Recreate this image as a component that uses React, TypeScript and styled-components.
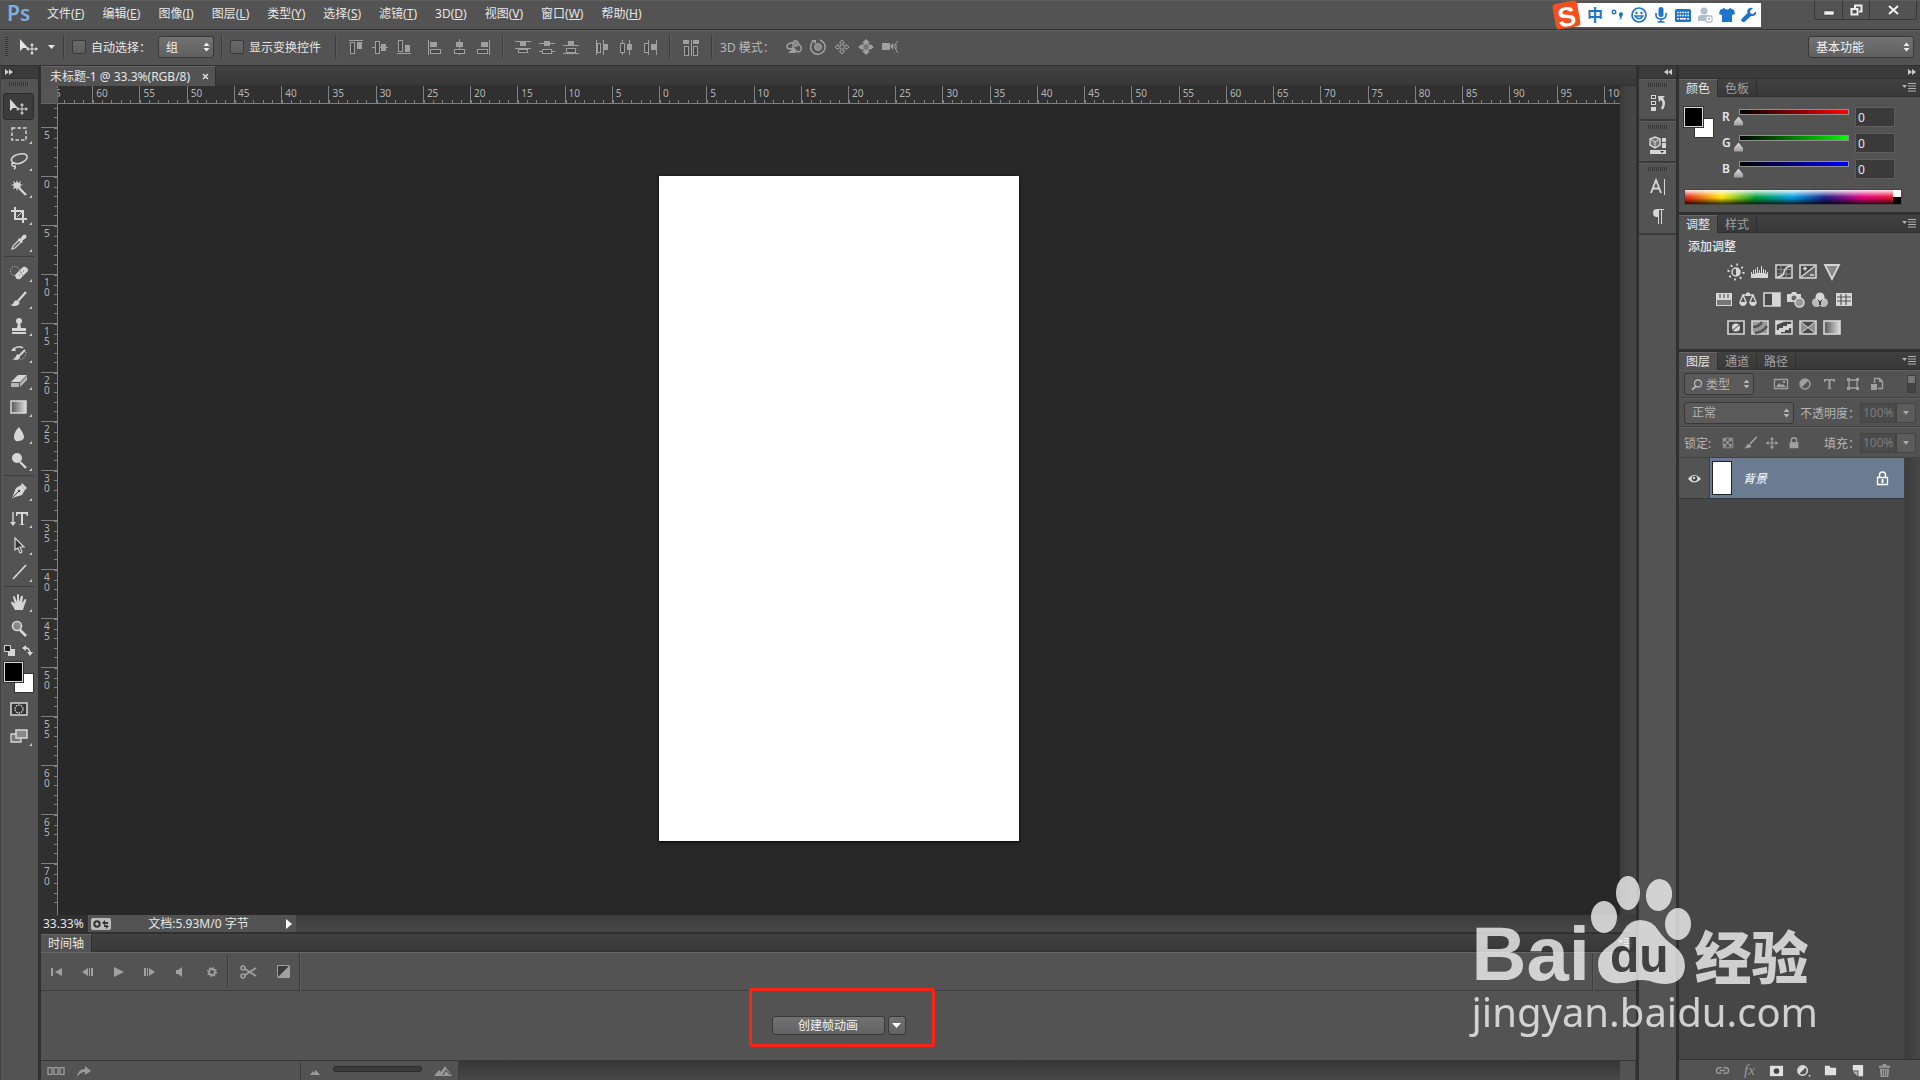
import React, { useState } from 'react';
import styled, { createGlobalStyle } from 'styled-components';

const c = {
  chrome: '#535353',
  dark: '#3b3b3b',
  edge: '#303030',
  line: '#3f3f3f',
  light: '#666',
  text: '#e6e6e6',
  dim: '#a0a0a0',
  icon: '#d6d6d6',
  canvas: '#282828',
};

const GlobalStyle = createGlobalStyle`
  * { box-sizing: border-box; }
  body { margin: 0; background: ${c.chrome}; }
  body, button, input, select {
    font-family: "Noto Sans", "Noto Sans CJK SC", sans-serif;
    font-size: 12px;
    color: ${c.text};
  }
  button { padding: 0; border: 0; background: none; cursor: pointer; }
`;

/* ---------- shared parts ---------- */

const Svg = styled.svg<{ $w: number; $h: number }>`
  display: block;
  flex: none;
  width: ${p => p.$w}px;
  height: ${p => p.$h}px;
  fill: currentColor;
  stroke: none;
`;

type IconProps = { w?: number; h?: number; vb?: string; children: React.ReactNode };
const Icon = ({ w = 18, h = 18, vb, children }: IconProps) => (
  <Svg $w={w} $h={h} viewBox={vb ?? `0 0 ${w} ${h}`} aria-hidden="true">{children}</Svg>
);
const S = (d: string, width = 1.5) => (
  <path d={d} fill="none" stroke="currentColor" strokeWidth={width} />
);

const IconButton = styled.button<{ $w?: number; $h?: number; $color?: string }>`
  display: flex;
  align-items: center;
  justify-content: center;
  flex: none;
  width: ${p => p.$w ?? 24}px;
  height: ${p => p.$h ?? 24}px;
  color: ${p => p.$color ?? c.dim};
`;

const Row = styled.div<{ $gap?: number }>`
  display: flex;
  align-items: center;
  gap: ${p => p.$gap ?? 0}px;
`;

const Separator = styled.span<{ $h?: number }>`
  flex: none;
  width: 2px;
  height: ${p => p.$h ?? 24}px;
  border-left: 1px solid #3d3d3d;
  border-right: 1px solid #5c5c5c;
`;

const SelectBox = styled.label<{ $w: number; $dim?: boolean }>`
  display: grid;
  flex: none;
  align-items: center;
  width: ${p => p.$w}px;
  height: 22px;
  border: 1px solid #383838;
  border-radius: 3px;
  background: ${p => (p.$dim ? '#5a5a5a' : 'linear-gradient(#727272, #606060)')};
  color: ${p => (p.$dim ? '#b4b4b4' : '#f0f0f0')};
  > * { grid-area: 1 / 1; }
  > svg { pointer-events: none; }
  > svg:last-child { justify-self: end; margin-right: 3px; }
`;

const NativeSelect = styled.select<{ $pad?: number }>`
  appearance: none;
  width: 100%;
  height: 20px;
  padding: 0 12px 0 ${p => p.$pad ?? 7}px;
  border: 0;
  background: transparent;
  color: inherit;
`;

const UpDown = () => (
  <Icon w={7} h={10}><path d="M0.5 4 3.5 0.5 6.5 4zM0.5 6h6L3.5 9.5z" /></Icon>
);

const Picker = ({ w, label, value, dim, pad, lead }: {
  w: number; label: string; value: string; dim?: boolean; pad?: number; lead?: React.ReactNode;
}) => (
  <SelectBox $w={w} $dim={dim}>
    {lead}
    <NativeSelect aria-label={label} $pad={pad} defaultValue={value}>
      <option style={{ color: '#000' }}>{value}</option>
    </NativeSelect>
    <UpDown />
  </SelectBox>
);

const DoubleArrow = ({ left }: { left?: boolean }) => (
  <Icon w={8} h={6}>
    <path d={left ? 'M4 0v6L0 3zM8 0v6L4 3z' : 'M0 0v6l4-3zM4 0v6l4-3z'} />
  </Icon>
);

const Grip = styled.span`
  width: 20px;
  height: 4px;
  background: repeating-linear-gradient(90deg, #333 0 1px, #5a5a5a 1px 2px);
`;

/* ---------- menu bar ---------- */

const Shell = styled.div`
  display: flex;
  flex-direction: column;
  height: 100vh;
  overflow: hidden;
  background: ${c.chrome};
`;

const MenuBar = styled.header`
  display: flex;
  flex: none;
  height: 30px;
  padding: 0 3px 0 7px;
  border-top: 1px solid #5e5e5e;
  border-bottom: 1px solid ${c.edge};
`;

const Logo = styled.span`
  width: 40px;
  color: #7fadde;
  font-size: 21px;
  font-weight: 600;
  line-height: 25px;
`;

const MenuList = styled.nav`
  display: flex;
  flex: 1;
  gap: 18px;
  align-items: center;
  height: 26px;
`;

const MenuItem = styled.button`
  white-space: nowrap;
  line-height: 20px;
`;

const ImeBar = styled.div`
  display: flex;
  align-items: center;
  width: 207px;
  height: 24px;
  margin: 2px 53px 0 0;
  background: linear-gradient(90deg, transparent 0 14px, #fff 14px);
  color: #1f74c8;
`;

const ImeLogo = styled.span`
  display: grid;
  place-items: center;
  width: 25px;
  height: 26px;
  margin-right: 5px;
  border-radius: 4px;
  background: #f2501e;
  color: #fff;
  font: 700 27px "Liberation Sans", sans-serif;
  transform: rotate(-10deg);
`;

const ImeChar = styled.button`
  width: 22px;
  color: #1f74c8;
  font-size: 16px;
  font-weight: 700;
  line-height: 20px;
`;

const WindowButtons = styled.div`
  display: flex;
  height: 19px;
  border: 1px solid #383838;
  border-top: 0;
  border-radius: 0 0 3px 3px;
  > button + button { border-left: 1px solid #383838; }
`;

const menus: [string, string][] = [
  ['文件', 'F'], ['编辑', 'E'], ['图像', 'I'], ['图层', 'L'], ['类型', 'Y'], ['选择', 'S'],
  ['滤镜', 'T'], ['3D', 'D'], ['视图', 'V'], ['窗口', 'W'], ['帮助', 'H'],
];

const TopMenu = () => (
  <MenuBar>
    <Logo>Ps</Logo>
    <MenuList>
      {menus.map(([name, key]) => (
        <MenuItem key={key}>{name}(<u>{key}</u>)</MenuItem>
      ))}
    </MenuList>
    <ImeBar>
      <ImeLogo>S</ImeLogo>
      <ImeChar>中</ImeChar>
      <IconButton $w={22} $color="#1f74c8" aria-label="标点">
        <Icon w={14} h={14}><circle cx="4" cy="4" r="1.8" fill="none" stroke="currentColor" strokeWidth="1.4" /><path d="M9 6.500a2 2 0 1 1 3 1.500q0 3-3 4 1.500-1.500 1.300-3A2 2 0 0 1 9 7z" /></Icon>
      </IconButton>
      <IconButton $w={22} $color="#1f74c8" aria-label="表情">
        <Icon w={16} h={16}><circle cx="8" cy="8" r="7" fill="none" stroke="currentColor" strokeWidth="1.700" /><circle cx="5.500" cy="6" r="1.200" /><circle cx="10.500" cy="6" r="1.200" />{S('M4 9q4 5.500 8 0z', 1.3)}</Icon>
      </IconButton>
      <IconButton $w={22} $color="#1f74c8" aria-label="语音">
        <Icon w={16} h={16}><rect x="5.500" y="0" width="5" height="10" rx="2.500" />{S('M3 6v2q0 4 5 4t5-4V6M8 12v3M4.500 15h7', 1.6)}</Icon>
      </IconButton>
      <IconButton $w={22} $color="#1f74c8" aria-label="键盘">
        <Icon w={16} h={13}><rect width="16" height="13" rx="1.500" /><path d="M2 3.500h12M2 6.500h12" stroke="#fff" strokeWidth="1.600" strokeDasharray="1.600 1" /><path d="M2 9.800h2M5 9.800h6M12 9.800h2" stroke="#fff" strokeWidth="1.600" /></Icon>
      </IconButton>
      <IconButton $w={22} $color="#b4bdca" aria-label="用户">
        <Icon w={16} h={16}><circle cx="7" cy="4" r="3.500" /><path d="M1 14V11q0-3 3-3h6q3 0 3 3v3z" /><rect x="9" y="9" width="6" height="6" rx="1" fill="#fff" stroke="currentColor" strokeWidth="1.300" /><path d="M11 11h2v2h-2z" /></Icon>
      </IconButton>
      <IconButton $w={22} $color="#1f74c8" aria-label="皮肤">
        <Icon w={16} h={16}><path d="M5 1q3 3 6 0l4 2 1 4-3 1v7H3V8L0 7l1-4z" /></Icon>
      </IconButton>
      <IconButton $w={22} $color="#1f74c8" aria-label="工具">
        <Icon w={16} h={16}><path d="M15 4.500 12 7 9.500 6.500 9 4l3-3Q8 0 6.500 3q-.500 1.500 0 3L1 11.500q-1.500 2 0 3t3 0L10 9q6 .500 5-4.500z" /></Icon>
      </IconButton>
    </ImeBar>
    <WindowButtons>
      <IconButton $w={27} $h={18} $color="#eee" aria-label="最小化"><Icon w={12} h={12}><path d="M1 7h10v4H1z" stroke="#333" strokeWidth=".5" /></Icon></IconButton>
      <IconButton $w={27} $h={18} $color="#eee" aria-label="还原"><Icon w={13} h={12}>{S('M5 4V1.500h6.500v6H9M1.500 5h6v5.500h-6z', 2)}</Icon></IconButton>
      <IconButton $w={47} $h={18} $color="#eee" aria-label="关闭"><Icon w={11} h={10}>{S('M1 1l9 8M10 1L1 9', 2)}</Icon></IconButton>
    </WindowButtons>
  </MenuBar>
);

/* ---------- options bar ---------- */

const OptionsBar = styled.section`
  display: flex;
  flex: none;
  align-items: center;
  gap: 7px;
  height: 36px;
  padding: 0 6px 2px 5px;
  border-top: 1px solid #606060;
  border-bottom: 1px solid ${c.edge};
`;

const SideGrip = styled.span`
  width: 3px;
  height: 20px;
  margin-right: 4px;
  background: repeating-linear-gradient(#333 0 1px, #5a5a5a 1px 2px);
`;

const Check = styled.label`
  display: flex;
  align-items: center;
  gap: 5px;
  white-space: nowrap;
  input {
    appearance: none;
    width: 14px;
    height: 14px;
    margin: 0;
    border: 1px solid #3a3a3a;
    border-radius: 2px;
    background: linear-gradient(#6a6a6a, #5e5e5e);
  }
  input:checked { background: #ccc; }
`;

const DimText = styled.span`
  color: #b8b8b8;
  white-space: nowrap;
`;

const Spacer = styled.span`
  flex: 1;
`;

const bar = (x: number, y: number, w: number, h: number) => <rect x={x} y={y} width={w} height={h} />;
const box = (x: number, y: number, w: number, h: number) => (
  <rect x={x + 0.5} y={y + 0.5} width={w - 1} height={h - 1} fill="#484848" stroke="currentColor" />
);

const alignIcons: [string, React.ReactNode][][] = [
  [
    ['顶对齐', <>{bar(1, 1, 14, 1)}{box(2, 3, 5, 12)}{bar(9, 3, 5, 7)}</>],
    ['垂直居中对齐', <>{bar(0, 8, 16, 1)}{box(3, 2, 5, 13)}{bar(9, 5, 5, 7)}</>],
    ['底对齐', <>{bar(1, 14, 14, 1)}{box(2, 1, 5, 12)}{bar(9, 6, 5, 7)}</>],
  ],
  [
    ['左对齐', <>{bar(1, 1, 1, 15)}{bar(3, 3, 7, 5)}{box(3, 10, 11, 5)}</>],
    ['水平居中对齐', <>{bar(8, 0, 1, 16)}{bar(5, 3, 7, 5)}{box(3, 10, 11, 5)}</>],
    ['右对齐', <>{bar(14, 1, 1, 15)}{bar(6, 3, 7, 5)}{box(2, 10, 11, 5)}</>],
  ],
  [
    ['按顶分布', <>{bar(0, 2, 16, 1)}{bar(5, 3, 6, 4)}{bar(0, 9, 16, 1)}{box(3, 10, 10, 4)}</>],
    ['垂直居中分布', <>{bar(0, 4, 16, 1)}{bar(5, 2, 6, 5)}{bar(0, 12, 16, 1)}{box(3, 10, 10, 5)}</>],
    ['按底分布', <>{bar(0, 6, 16, 1)}{bar(5, 2, 6, 4)}{box(3, 9, 10, 5)}{bar(0, 14, 16, 1)}</>],
  ],
  [
    ['按左分布', <>{bar(2, 1, 1, 15)}{box(3, 4, 4, 10)}{bar(9, 1, 1, 15)}{bar(10, 5, 4, 6)}</>],
    ['水平居中分布', <>{bar(4, 1, 1, 15)}{box(2, 4, 5, 10)}{bar(11, 1, 1, 15)}{bar(9, 5, 5, 6)}</>],
    ['按右分布', <>{bar(6, 1, 1, 15)}{box(2, 4, 5, 10)}{bar(14, 1, 1, 15)}{bar(9, 5, 5, 6)}</>],
  ],
];

const IconGroup = ({ icons }: { icons: [string, React.ReactNode][] }) => (
  <Row>
    {icons.map(([name, art]) => (
      <IconButton key={name} aria-label={name}><Icon w={16} h={16}>{art}</Icon></IconButton>
    ))}
  </Row>
);

const modes3d: [string, React.ReactNode][] = [
  ['旋转', <><circle cx="9.500" cy="4.500" r="3" fill="#888" stroke="currentColor" />{S('M6.500 3.500Q0 5 1 8t6 1.500M12.500 5q4 3 2.500 6t-5 1l-4-5')}<path d="M2 14h8L8 9z" /></>],
  ['滚动', <><circle cx="8" cy="8" r="3.500" fill="#888" stroke="currentColor" />{S('M3 2.500A7.300 7.300 0 1 0 10 1')}<path d="M1 1h5v4z" /></>],
  ['拖动', <>{S('M8 1l2.500 3H9v3h3V5.500L15 8l-3 2.500V9H9v3h1.500L8 15l-2.500-3H7V9H4v1.500L1 8l3-2.500V7h3V4H5.500z', 1)}</>],
  ['滑动', <><circle cx="8" cy="8" r="3.500" fill="#777" stroke="currentColor" strokeWidth="1.500" /><path d="M8 0 4 4h8zM8 16l-4-4h8zM0 8l4-3v6zM16 8l-4-3v6z" /></>],
  ['缩放', <><path d="M0 4h8v7H0z" /><path d="M8 7l3-3v7z" />{S('M16 2q-5 5-4 6t4 6M14 5v5', 1)}</>],
];

const moveArt = (
  <>
    <path d="M1 1v12l3-3h5z" />
    {S('M13 6v10M8 11h10', 1)}
    <path d="M13 5l-2 2.500h4zM13 17l-2-2.500h4zM7 11l2.500-2v4zM19 11l-2.500-2v4z" />
  </>
);

const Options = () => (
  <OptionsBar>
    <SideGrip />
    <Icon w={20} h={18}>{moveArt}</Icon>
    <Icon w={10} h={6}><path d="M2 1h7L5.500 5z" /></Icon>
    <Separator />
    <Check><input type="checkbox" />自动选择：</Check>
    <Picker w={56} label="自动选择对象" value="组" />
    <Separator />
    <Check><input type="checkbox" />显示变换控件</Check>
    <Spacer style={{ flex: 'none' }} />
    <Separator />
    <IconGroup icons={alignIcons[0]} />
    <IconGroup icons={alignIcons[1]} />
    <Separator />
    <IconGroup icons={alignIcons[2]} />
    <IconGroup icons={alignIcons[3]} />
    <Separator />
    <IconButton $w={26} aria-label="自动对齐图层">
      <Icon w={16} h={17}>{bar(0, 1, 6, 4)}{bar(10, 1, 6, 4)}{bar(8, 1, 1, 16)}{box(1, 7, 5, 10)}{box(10, 7, 5, 10)}</Icon>
    </IconButton>
    <Separator />
    <DimText>3D 模式：</DimText>
    <IconGroup icons={modes3d} />
    <Spacer />
    <Picker w={106} label="工作区" value="基本功能" />
  </OptionsBar>
);

/* ---------- tool palette ---------- */

const Workspace = styled.main`
  display: flex;
  flex: 1;
  min-height: 0;
  background: ${c.edge};
`;

const Palette = styled.aside`
  display: flex;
  flex: none;
  flex-direction: column;
  align-items: center;
  width: 38px;
  margin-right: 3px;
  padding-right: 2px;
  border-left: 1px solid #444;
  background: ${c.chrome};
  > :first-child { margin-right: -2px; }
`;

const PaletteHead = styled.div<{ $end?: boolean }>`
  display: flex;
  flex: none;
  align-items: center;
  justify-content: ${p => (p.$end ? 'flex-end' : 'flex-start')};
  align-self: stretch;
  height: 13px;
  padding: 0 4px;
  border-bottom: 1px solid ${c.edge};
  background: ${c.dark};
  color: #ccc;
`;

const GripRow = styled.div<{ $h?: number }>`
  display: flex;
  flex: none;
  align-items: center;
  justify-content: center;
  height: ${p => p.$h ?? 9}px;
`;

const ToolGroup = styled.div`
  display: flex;
  flex: none;
  flex-direction: column;
  align-items: center;
  width: 30px;
  padding: 1px 0;
  & + & { border-top: 1px solid #3d3d3d; }
`;

const ToolButton = styled.button<{ $active?: boolean; $more?: boolean }>`
  position: relative;
  display: flex;
  align-items: center;
  justify-content: center;
  width: 31px;
  height: 27px;
  border: 1px solid ${p => (p.$active ? '#2b2b2b' : 'transparent')};
  border-radius: 3px;
  background: ${p => (p.$active ? '#3c3c3c' : 'none')};
  color: ${c.icon};
  &::after {
    content: '';
    display: ${p => (p.$more ? 'block' : 'none')};
    position: absolute;
    right: 1px;
    bottom: 2px;
    width: 3px;
    height: 3px;
    background: #c8c8c8;
    clip-path: polygon(100% 0, 100% 100%, 0 100%);
  }
`;

type Tool = [string, React.ReactNode, boolean?];
const toolGroups: Tool[][] = [
  [
    ['移动', moveArt, true],
    ['矩形选框', <><rect x="2" y="3" width="14" height="12" fill="none" stroke="currentColor" strokeWidth="1.500" strokeDasharray="3.500 2" /></>],
    ['套索', <>{S('M4 11Q0 9 2 6t8-4 7 2-4 6-9 1q-3 0-2 2t3 1q1 2-1 3', 1.5)}</>],
    ['魔棒', <><path d="M7 1l1 3 3-2-1 3 3 1-3 1 1 3-3-1-1 3-1-3-3 1 1-3-3-1 3-1-1-3 3 2z" />{S('M9 9l7 7', 2.4)}</>],
    ['裁剪', <>{S('M5 1v12h12M1 5h12v12', 2)}{S('M7 11l7-7', 1)}</>],
    ['吸管', <>{S('M2 16l1-3 6-6 2 2-6 6z', 1.3)}<path d="M8 6l1-1 1 1 3-4q2-1 3 0t0 3l-4 3 1 1-1 1z" /></>],
  ],
  [
    ['修复画笔', <><path d="M5 12 13 4q2-1 4 1t1 3l-8 8q-3 1-4-1t-1-3z" /><path d="M9 12h1M11 10h1M13 8h1M12 12h1M10 9h1" stroke="#666" /><circle cx="5" cy="8" r="4.500" fill="none" stroke="currentColor" strokeDasharray="1 1.500" /></>],
    ['画笔', <>{S('M16 2l-8 9', 2.2)}<path d="M0 15q3 0 4-3t4-1 0 4-8 0z" /></>],
    ['仿制图章', <><circle cx="9" cy="4" r="3" /><path d="M8 6h2l1 5h5v3H2v-3h5zM2 15h14v2H2z" /></>],
    ['历史记录画笔', <>{S('M15 6l-6 6', 2)}<path d="M2 15q3 0 4-3t3-1 0 4-7 0zM1 7l3-4 2 4z" />{S('M4 5q4-4 9-1', 1.5)}<path d="M16 8q0 6-6 8" fill="none" stroke="currentColor" strokeDasharray="1 1.500" /></>],
    ['橡皮擦', <><path d="M1 11 8 4h9l-7 7z" /><path d="M1 12h8v4H1zM10 12l7-7v4l-7 7z" fillOpacity=".75" /></>],
    ['渐变', <><defs><linearGradient id="toolFill"><stop stopColor="#555" /><stop offset="1" stopColor="#ddd" /></linearGradient></defs><rect x="1" y="3" width="15" height="12" fill="url(#toolFill)" stroke="currentColor" strokeWidth="1.500" /></>],
    ['模糊', <path d="M9 2q5 7 5 10t-5 4-5-4 5-10z" />],
    ['减淡', <><circle cx="7" cy="6" r="5" />{S('M10 10l6 6', 2.4)}</>],
  ],
  [
    ['钢笔', <><path d="M11 3l4 5-3 5-10 3 4-10z" /><path d="M12 1l5 5-2 2-4-5z" /><path d="M3 15l5-5" stroke="#444" /><circle cx="9" cy="9" r="1.200" fill="#444" /></>],
    ['文字', <><path d="M6 3h12v4h-1l-1-2h-3v10l2 1H9l2-1V5H8L7 7H6z" />{S('M3 3v12', 1.4)}<path d="M0 13h6l-3 4z" /></>],
    ['直接选择', <path d="M5 2v12l3-2 2 5 2-1-2-5h4z" fill="#333" stroke="currentColor" strokeWidth="1.200" />],
    ['直线', <>{S('M3 16L16 2', 1.8)}</>],
  ],
  [
    ['抓手', <path d="M5 17Q3 13 1 10q0-2 2-1l2 2-2-7q1-2 2 0l2 5V2q1-2 2 0v7l2-6q2-1 2 1l-1 6 3-4q2 0 1 2-2 5-3 9z" />],
    ['缩放', <><circle cx="7" cy="6" r="4.500" fill="#888" stroke="currentColor" strokeWidth="1.600" />{S('M10 10l6 6', 2.6)}</>, true],
  ],
];

const Swatches = styled.div`
  display: grid;
  flex: none;
  grid-template: 11px 9px 11px / 10px 9px 11px;
`;

const Swatch = styled.button<{ $fill: string; $back?: boolean }>`
  grid-area: ${p => (p.$back ? '2 / 2 / 4 / 4' : '1 / 1 / 3 / 3')};
  z-index: ${p => (p.$back ? 0 : 1)};
  border: 1px solid ${p => (p.$back ? '#444' : '#d8d8d8')};
  outline: 1px solid #333;
  outline-offset: ${p => (p.$back ? '-1px' : '0')};
  background: ${p => p.$fill};
`;

const ColorPair = () => (
  <Swatches>
    <Swatch $fill="#000" aria-label="前景色" />
    <Swatch $fill="#fff" $back aria-label="背景色" />
  </Swatches>
);

const SmallTools = styled.div`
  display: flex;
  flex: none;
  justify-content: space-between;
  width: 29px;
  height: 19px;
  padding-top: 2px;
  color: ${c.icon};
`;

const ToolPalette = () => {
  const [active, setActive] = useState('移动');
  return (
    <Palette>
      <PaletteHead><DoubleArrow /></PaletteHead>
      <GripRow><Grip /></GripRow>
      <GripRow $h={4} />
      {toolGroups.map((group, i) => (
        <ToolGroup key={i}>
          {group.map(([name, art, single]) => (
            <ToolButton key={name} aria-label={name} $more={!single} $active={active === name} onClick={() => setActive(name)}>
              <Icon w={name === '移动' ? 20 : 18}>{art}</Icon>
            </ToolButton>
          ))}
        </ToolGroup>
      ))}
      <SmallTools>
        <Icon w={11} h={11}><path d="M4 4h7v7H4z" /><path d="M.5.5h6v6h-6z" fill="#222" stroke="currentColor" /></Icon>
        <Icon w={11} h={11}>{S('M2 3q6-1 6 6', 1.5)}<path d="M0 3l4-3v6zM5 7h6l-3 4z" /></Icon>
      </SmallTools>
      <ColorPair />
      <GripRow $h={2} />
      <ToolButton aria-label="快速蒙版">
        <Icon><path d="M1 3h16v12H1z" fill="#333" stroke="currentColor" strokeWidth="1.500" /><circle cx="9" cy="9" r="4" fill="none" stroke="currentColor" strokeDasharray="1.500 1" strokeWidth="1.300" /></Icon>
      </ToolButton>
      <ToolButton aria-label="屏幕模式" $more>
        <Icon><path d="M1 7h10v8H1z" fill="#777" stroke="currentColor" strokeWidth="1.300" /><path d="M6 3h11v8H6z" fill="#888" stroke="currentColor" strokeWidth="1.500" /></Icon>
      </ToolButton>
    </Palette>
  );
};

/* ---------- document window ---------- */

const Center = styled.section`
  display: flex;
  flex: 1;
  flex-direction: column;
  min-width: 0;
`;

const TabStrip = styled.div<{ $h: number }>`
  display: flex;
  flex: none;
  align-items: stretch;
  height: ${p => p.$h}px;
  border-bottom: 1px solid ${c.edge};
  background: linear-gradient(#414141, #383838);
  color: ${c.dim};
`;

const Tab = styled.button<{ $active?: boolean; $doc?: boolean }>`
  display: flex;
  align-items: center;
  gap: 12px;
  padding: ${p => (p.$doc ? '0 6px 0 9px' : '0 7px')};
  border-top: 1px solid ${p => (p.$active ? c.light : 'transparent')};
  border-right: 1px solid #2f2f2f;
  background: ${p => (p.$active ? c.chrome : 'transparent')};
  color: ${p => (p.$active ? c.text : c.dim)};
  line-height: 16px;
  white-space: nowrap;
  margin-bottom: -1px;
`;

const DocGrid = styled.div`
  display: grid;
  flex: 1;
  grid-template: 18px 1fr 18px / 17px 1fr 16px;
  min-height: 0;
`;

const Corner = styled.div`
  border: 1px dotted #777;
  border-width: 0 1px 1px 0;
  background: #555;
`;

const RulerX = styled.div`
  overflow: hidden;
  border-bottom: 1px solid #808080;
  background: ${c.edge};
`;

const TrackX = styled.div`
  display: grid;
  grid-template-columns: repeat(34, 1fr);
  width: 1606px;
  height: 17px;
  margin-left: -13px;
`;

const MarkX = styled.span`
  padding-left: 3px;
  border-left: 1px solid #808080;
  background: repeating-linear-gradient(90deg, #808080 0 1px, transparent 1px 20%) bottom / 100% 3px no-repeat;
  color: #b4b4b4;
  font-size: 10px;
  line-height: 14px;
`;

const RulerY = styled.div`
  overflow: hidden;
  border-right: 1px solid #808080;
  background: ${c.edge};
`;

const TrackY = styled.div`
  display: grid;
  grid-template-rows: repeat(17, 1fr);
  height: 834px;
  margin-top: -26px;
`;

const MarkY = styled.span`
  padding: 2px 7px 0 3px;
  border-top: 1px solid #808080;
  background: repeating-linear-gradient(#808080 0 1px, transparent 1px 20%) right / 3px 100% no-repeat;
  color: #b4b4b4;
  font-size: 10px;
  line-height: 10px;
  word-break: break-all;
`;

const Canvas = styled.div`
  display: flex;
  align-items: flex-start;
  justify-content: center;
  padding-top: 72px;
  background: ${c.canvas};
`;

const Artboard = styled.div`
  width: 360px;
  height: 665px;
  background: #fff;
  box-shadow: 0 1px 3px #000;
`;

const ScrollY = styled.div`
  grid-row: 1 / 3;
  grid-column: 3;
  background: linear-gradient(90deg, #3c3c3c, #474747);
`;

const Status = styled.footer`
  display: flex;
  grid-column: 1 / 4;
  height: 17px;
  background: linear-gradient(#3c3c3c, #474747);
`;

const ZoomInput = styled.input`
  width: 47px;
  padding: 0 2px;
  border: 0;
  background: ${c.edge};
`;

const StatusInfo = styled.div`
  display: flex;
  align-items: center;
  justify-content: space-between;
  width: 208px;
  padding: 0 3px;
  background: ${c.chrome};
  line-height: 16px;
`;

const xMarks = Array.from({ length: 34 }, (_, i) => Math.abs(i * 5 - 65));
const yMarks = Array.from({ length: 17 }, (_, i) => Math.abs(i * 5 - 10));

const DocumentWindow = () => (
  <>
    <TabStrip $h={20}>
      <Tab $active $doc>未标题-1 @ 33.3%(RGB/8)<Icon w={7} h={7}>{S('M1 1l5 5M6 1L1 6', 1.3)}</Icon></Tab>
    </TabStrip>
    <DocGrid>
      <Corner />
      <RulerX><TrackX>{xMarks.map((n, i) => <MarkX key={i}>{n}</MarkX>)}</TrackX></RulerX>
      <ScrollY />
      <RulerY><TrackY>{yMarks.map((n, i) => <MarkY key={i}>{n}</MarkY>)}</TrackY></RulerY>
      <Canvas><Artboard /></Canvas>
      <Status>
        <ZoomInput aria-label="缩放比例" defaultValue="33.33%" />
        <StatusInfo>
          <Icon w={20} h={12}><rect width="20" height="12" rx="2" fill="#bbb" /><circle cx="6" cy="6" r="2.700" fill="none" stroke="#333" strokeWidth="2" /><path d="M11 5l3-3v2h3v2h-3v1zM18 8l-3 3V9h-2V7h2z" fill="#333" /></Icon>
          <span>文档:5.93M/0 字节</span>
          <Icon w={7} h={10}><path d="M0 0v10l6-5z" fill="#fff" /></Icon>
        </StatusInfo>
      </Status>
    </DocGrid>
  </>
);

/* ---------- timeline ---------- */

const TimelinePanel = styled.section`
  display: flex;
  flex: none;
  flex-direction: column;
  margin-top: 1px;
  background: ${c.chrome};
`;

const MenuGlyph = () => (
  <Icon w={14} h={9}><path d="M0 2h5L2.500 5zM6 0h8v1H6zM6 2.500h8v1H6zM6 5h8v1H6zM6 7.500h8v1H6z" /></Icon>
);

const TabMenu = styled.button`
  margin-left: auto;
  padding: 0 4px;
  color: #b0b0b0;
`;

const Transport = styled.div`
  display: flex;
  align-items: center;
  height: 39px;
  padding-right: 42px;
  border-top: 1px solid ${c.light};
  border-bottom: 1px solid #3d3d3d;
`;

const TimelineBody = styled.div`
  display: flex;
  align-items: flex-start;
  justify-content: center;
  height: 69px;
  padding-top: 25px;
`;

const CreateGroup = styled.div`
  position: relative;
  display: flex;
  gap: 3px;
`;

const Highlight = styled.span`
  position: absolute;
  inset: -28px -29px -12px -23px;
  border: 3px solid #fb2314;
  border-radius: 3px;
  pointer-events: none;
`;

const PushButton = styled.button<{ $w: number }>`
  display: flex;
  align-items: center;
  justify-content: center;
  width: ${p => p.$w}px;
  height: 19px;
  border: 1px solid #383838;
  border-radius: 3px;
  background: linear-gradient(#727272, #626262);
  color: #f0f0f0;
  line-height: 16px;
`;

const TimelineFoot = styled.div`
  display: flex;
  height: 20px;
  border-top: 1px solid #363636;
  background: linear-gradient(#373737, #474747);
`;

const FootCell = styled.div<{ $w?: number; $start?: boolean }>`
  display: flex;
  align-items: center;
  justify-content: ${p => (p.$start ? 'flex-start' : 'space-between')};
  gap: 12px;
  width: ${p => p.$w ?? 16}px;
  padding: 0 6px;
  border-right: 1px solid #3d3d3d;
  background: ${c.chrome};
  color: #9a9a9a;
`;

const ZoomSlider = styled.input`
  appearance: none;
  width: 89px;
  height: 6px;
  margin: 0 0 4px;
  border: 1px solid #2a2a2a;
  border-radius: 3px;
  background: #3a3a3a;
  &::-webkit-slider-thumb { appearance: none; width: 1px; height: 1px; }
`;

const transport: [string, React.ReactNode][] = [
  ['第一帧', <><path d="M0 1h2v8H0zM11 1v8L4 5z" /></>],
  ['上一帧', <><path d="M6 1v8L0 5zM7 1h1v8H7zM9 1h2v8H9z" /></>],
  ['播放', <><path d="M1 0v10l10-5z" /></>],
  ['下一帧', <><path d="M0 1h2v8H0zM3 1h1v8H3zM5 1v8l6-4z" /></>],
  ['音频', <><path d="M1 3h2l4-3v10L3 7H1z" /></>],
  ['选项', <><circle cx="6" cy="5" r="3" fill="none" stroke="currentColor" strokeWidth="1.800" /><circle cx="6" cy="5" r="4.300" fill="none" stroke="currentColor" strokeWidth="1.400" strokeDasharray="1.700 1.670" /></>],
];

const Timeline = () => (
  <TimelinePanel>
    <TabStrip $h={18}>
      <Tab $active>时间轴</Tab>
      <TabMenu aria-label="时间轴菜单"><MenuGlyph /></TabMenu>
    </TabStrip>
    <Transport>
      {transport.map(([name, art]) => (
        <IconButton key={name} $w={31} aria-label={name}><Icon w={12} h={10}>{art}</Icon></IconButton>
      ))}
      <Separator $h={33} />
      <IconButton $w={38} aria-label="拆分">
        <Icon w={17} h={14}><circle cx="3" cy="3" r="2" fill="none" stroke="currentColor" strokeWidth="1.600" /><circle cx="3" cy="11" r="2" fill="none" stroke="currentColor" strokeWidth="1.600" />{S('M5 4l11 7M5 10L16 3', 1.8)}</Icon>
      </IconButton>
      <IconButton $w={32} aria-label="过渡效果">
        <Icon w={13} h={13}><path d="M.5.5h12v12H.5z" fill="#3a3a3a" stroke="currentColor" /><path d="M12 1v11H1z" /></Icon>
      </IconButton>
      <Separator $h={38} />
      <Spacer />
      <Separator $h={38} />
    </Transport>
    <TimelineBody>
      <CreateGroup>
        <PushButton $w={113}>创建帧动画</PushButton>
        <PushButton $w={18} aria-label="更多选项"><Icon w={9} h={5}><path d="M0 0h9L4.500 5z" fill="#fff" /></Icon></PushButton>
        <Highlight />
      </CreateGroup>
    </TimelineBody>
    <TimelineFoot>
      <FootCell $w={260} $start>
        <Icon w={18} h={8}>{S('M1 .5h4v7H1zM7 .5h4v7H7zM13 .5h4v7h-4z', 1.3)}</Icon>
        <Icon w={14} h={12}><path d="M0 12Q1 4 8 4V1l6 5-6 4V7Q3 7 0 12z" /></Icon>
      </FootCell>
      <FootCell $w={158}>
        <Icon w={14} h={8}><path d="M3 8l3-4 1 2 2-3 4 5z" /></Icon>
        <ZoomSlider type="range" aria-label="时间轴缩放" />
        <Icon w={18} h={10}><path d="M0 10l5-6 2 2 4-6 7 10z" /><path d="M9 9l3-5 4 5" stroke="#444" fill="none" /></Icon>
      </FootCell>
      <Spacer />
      <FootCell />
    </TimelineFoot>
  </TimelinePanel>
);

/* ---------- right dock ---------- */

const Dock = styled.aside`
  display: flex;
  flex: none;
  gap: 3px;
  margin-left: 3px;
`;

const IconDock = styled.div`
  display: flex;
  flex-direction: column;
  width: 37px;
  background: ${c.chrome};
`;

const DockGroup = styled.div`
  display: flex;
  flex-direction: column;
  align-items: center;
  padding-bottom: 2px;
  border-top: 1px solid #606060;
  border-bottom: 2px solid #3a3a3a;
`;

const Panels = styled.div`
  display: flex;
  flex-direction: column;
  width: 241px;
`;

const Panel = styled.section<{ $h?: number }>`
  display: flex;
  flex-direction: column;
  flex: ${p => (p.$h ? 'none' : '1')};
  height: ${p => (p.$h ? `${p.$h}px` : 'auto')};
  min-height: 0;
  background: ${c.chrome};
  & + & { margin-top: 3px; }
`;

const PanelTabs = ({ names, label }: { names: string[]; label: string }) => (
  <TabStrip $h={18}>
    {names.map((n, i) => <Tab key={n} $active={i === 0}>{n}</Tab>)}
    <TabMenu aria-label={label}><MenuGlyph /></TabMenu>
  </TabStrip>
);

const ColorBody = styled.div`
  display: flex;
  gap: 8px;
  padding: 7px 0 0 5px;
  > :first-child { margin-top: 3px; }
`;

const Channel = styled.label`
  display: grid;
  grid-template-columns: 12px 121px 40px;
  align-items: center;
  height: 26px;
  font-weight: 600;
  line-height: 18px;
`;

const ChannelSlider = styled.input<{ $to: string }>`
  appearance: none;
  width: 120px;
  height: 18px;
  margin: 0;
  background:
    linear-gradient(90deg, #000, ${p => p.$to}) 6px 2px / 108px 4px no-repeat,
    linear-gradient(#909090, #909090) 5px 1px / 110px 6px no-repeat;
  &::-webkit-slider-thumb {
    appearance: none;
    width: 9px;
    height: 9px;
    margin-top: 8px;
    background: linear-gradient(#ddd, #999);
    clip-path: polygon(50% 0, 100% 60%, 100% 100%, 0 100%, 0 60%);
  }
`;

const ValueInput = styled.input<{ $w: number; $dim?: boolean }>`
  width: ${p => p.$w}px;
  height: 20px;
  padding: 0 2px;
  border: 1px solid ${p => (p.$dim ? '#444' : '#5e5e5e')};
  background: ${p => (p.$dim ? '#4b4b4b' : '#3a3a3a')};
  color: ${p => (p.$dim ? '#7c7c7c' : c.text)};
`;

const Spectrum = styled.div`
  display: flex;
  flex: none;
  width: 218px;
  height: 16px;
  margin: 7px 0 0 5px;
  border: 1px solid #444;
  background:
    linear-gradient(rgba(255, 255, 255, .9), rgba(255, 255, 255, 0) 50%, rgba(0, 0, 0, 0) 55%, rgba(0, 0, 0, .8)),
    linear-gradient(90deg, #e8201c, #ffe800 17%, #00a040 33%, #00a0e8 50%, #20208a 65%, #e4007f 82%, #e8201c);
  &::after {
    content: '';
    width: 8px;
    margin-left: auto;
    background: linear-gradient(#fff 50%, #000 50%);
  }
`;

const AdjustBody = styled.div`
  display: flex;
  flex-direction: column;
  align-items: center;
  gap: 4px;
  padding: 5px 41px 0 9px;
`;

const AdjustTitle = styled.h2`
  align-self: stretch;
  margin: 0;
  font-size: 12px;
  font-weight: 500;
  line-height: 18px;
`;

const frame = <path d="M1 2h16v13H1z" fill="#484848" stroke="currentColor" strokeWidth="1.600" />;
const adjustRows: [string, React.ReactNode][][] = [
  [
    ['亮度/对比度', <><circle cx="9" cy="9" r="4" fill="none" stroke="currentColor" strokeWidth="1.500" /><path d="M9 5a4 4 0 0 1 0 8z" /><circle cx="9" cy="9" r="7.500" fill="none" stroke="currentColor" strokeWidth="2.200" strokeDasharray="1.800 4.090" /></>],
    ['色阶', <path d="M0 15V9h1v2h1V7h1v4h1V6h1v4h1V4h1v6h1V7h1v3h1V3h1v7h1V6h1v4h1V7h1v4h1V9h1v6z" />],
    ['曲线', <>{frame}<path d="M6 2v13M11 2v13M1 6.500h16M1 11h16" stroke="#999" strokeWidth=".8" />{S('M2 14q6 0 7-5t7-6', 1.7)}</>],
    ['曝光度', <>{frame}<path d="M17 2v13H1z" fillOpacity=".2" />{S('M2 14L16 3M4 5.500h4M6 3.500v4M11 12h4', 1.5)}</>],
    ['自然饱和度', <path d="M2 2h14L9 16z" fill="#888" stroke="currentColor" strokeWidth="1.800" />],
  ],
  [
    ['色相/饱和度', <><path d="M1 2h16v13H1z" /><path d="M5 3v4M9 3v4M13 3v4" stroke="#777" strokeWidth="1.500" /><path d="M2 9h14v5H2z" fill="#777" /></>],
    ['色彩平衡', <>{S('M9 1v3M3 4h12M4 4L1 11M4 4l3 7M14 4l-3 7M14 4l3 7', 1.4)}<path d="M7 2h4v3H7zM0 11h8q-1 4-4 4t-4-4zM10 11h8q-1 4-4 4t-4-4z" /></>],
    ['黑白', <>{frame}<path d="M9 2h8v13H9z" /></>],
    ['照片滤镜', <><path d="M0 3h4l1-2h4l1 2h4v8H0z" /><circle cx="7" cy="7" r="2.500" fill="#666" /><circle cx="12.500" cy="11.500" r="4.500" fill="#999" stroke="currentColor" strokeWidth="1.500" /></>],
    ['通道混合器', <><circle cx="9" cy="6" r="4.500" /><circle cx="5.500" cy="11.500" r="4.500" fillOpacity=".8" /><circle cx="12.500" cy="11.500" r="4.500" fillOpacity=".8" /><path d="M6 8l3 2 3-2-2 3v3H8v-3z" fill="#444" /></>],
    ['颜色查找', <><path d="M1 2h16v13H1z" /><path d="M2 6h14M2 10h14M6 3v11M11 3v11" stroke="#555" strokeWidth="1.200" /></>],
  ],
  [
    ['反相', <>{frame}<circle cx="9" cy="8.500" r="4" /><path d="M2 14L16 3" stroke="#444" /></>],
    ['色调分离', <><path d="M1 2h16v13H1z" fill="#999" stroke="currentColor" strokeWidth="1.600" /><path d="M2 8q6 0 9-5M4 14q8-1 12-7" fill="none" stroke="#555" strokeWidth="2.500" /></>],
    ['阈值', <>{frame}<path d="M1 15V11h3V9h4V7h4V5h5v4h-3v2h-4v2H6v2zM1 2h10L1 6z" /></>],
    ['可选颜色', <>{frame}<path d="M1 2l8 6.500L1 15zM17 2L9 8.500l8 6.500z" fillOpacity=".5" />{S('M1 2l16 13M17 2L1 15', 1)}</>],
    ['渐变映射', <rect x="1" y="2" width="16" height="13" fill="url(#toolFill)" stroke="currentColor" strokeWidth="1.600" />],
  ],
];

const LayerBar = styled.div<{ $h?: number }>`
  display: flex;
  flex: none;
  align-items: center;
  height: ${p => p.$h ?? 29}px;
  padding: 0 4px 0 5px;
  border-top: 1px solid #606060;
  border-bottom: 1px solid #424242;
  color: #b4b4b4;
  white-space: nowrap;
`;

const FilterRow = styled(Row)`
  flex: 1;
  justify-content: space-between;
  padding-left: 15px;
`;

const Percent = styled.label`
  display: flex;
  align-items: center;
  margin-left: auto;
`;

const DropButton = styled.button`
  display: grid;
  place-items: center;
  width: 20px;
  height: 20px;
  border: 1px solid #444;
  border-radius: 0 2px 2px 0;
  background: #5c5c5c;
  color: #aaa;
`;

const PercentField = ({ label }: { label: string }) => (
  <Row style={{ marginLeft: 'auto' }}>
    <Percent>
      {label}：
      <ValueInput $w={36} $dim defaultValue="100%" />
    </Percent>
    <DropButton aria-label={`${label}滑块`}><Icon w={6} h={4}><path d="M0 0h6L3 4z" /></Icon></DropButton>
  </Row>
);

const LayerList = styled.ul`
  flex: 1;
  margin: 0;
  padding: 0;
  background: linear-gradient(90deg, #464646 calc(100% - 16px), #3c3c3c calc(100% - 15px), #484848);
  list-style: none;
`;

const LayerItem = styled.li`
  display: flex;
  height: 41px;
  margin-right: 16px;
  border-bottom: 1px solid #3a3a3a;
`;

const EyeCell = styled(IconButton)`
  background: ${c.chrome};
`;

const LayerMain = styled.div`
  display: flex;
  flex: 1;
  align-items: center;
  padding: 0 14px 0 2px;
  border-left: 1px solid #3a3a3a;
  background: #6b7c92;
  color: #fff;
`;

const LayerThumb = styled.span`
  width: 20px;
  height: 34px;
  margin-right: 11px;
  border: 1px solid #222;
  background: #fff;
`;

const LayerName = styled.em`
  flex: 1;
`;

const LayerFoot = styled.footer`
  display: flex;
  flex: none;
  align-items: center;
  justify-content: flex-end;
  height: 21px;
  padding-right: 22px;
  border-top: 1px solid #333;
`;

const Toggle = styled.button`
  width: 9px;
  height: 18px;
  border: 1px solid #3d3d3d;
  background: linear-gradient(#777 45%, #444 45%);
`;

const filterIcons: [string, React.ReactNode][] = [
  ['像素', <><path d="M1.500 3.500h13v9h-13z" fill="none" stroke="currentColor" strokeWidth="1.300" /><path d="M3 11l3-4 2 2 2-1 3 3z" /><path d="M10 5h2v2h-2z" /></>],
  ['调整', <><circle cx="8" cy="8" r="5" fill="none" stroke="currentColor" strokeWidth="1.400" /><path d="M4.500 11.500l7-7A5 5 0 0 0 4.500 11.500z" /></>],
  ['文字', <path d="M3 3h11v3h-1l-1-1.500H9.500V12l1.500 1H6l1.500-1V4.500H5L4 6H3z" />],
  ['形状', <><path d="M4 4h8v8H4z" fill="none" stroke="currentColor" strokeWidth="1.300" /><path d="M2 2h3v3H2zM11 2h3v3h-3zM2 11h3v3H2zM11 11h3v3h-3z" /></>],
  ['智能对象', <><path d="M5.500 7V2.500h5l3 3v7H9" fill="none" stroke="currentColor" strokeWidth="1.400" /><path d="M10 2v4h4zM2 8h6v6H2z" /></>],
];

const lockIcons: [string, React.ReactNode][] = [
  ['锁定透明像素', <><path d="M2.500 2.500h11v11h-11z" fill="none" stroke="currentColor" /><path d="M3 3h3v3H3zM9 3h3v3H9zM6 6h3v3H6zM3 9h3v3H3zM9 9h3v3H9z" /></>],
  ['锁定图像像素', <>{S('M16 1L8 9', 1.8)}<path d="M0 14q3 0 4-3t4-1 0 3-8 1z" /></>],
  ['锁定位置', <>{S('M8 2v12M2 8h12', 1.4)}<path d="M8 1L5.500 4h5zM8 15l-2.500-3h5zM1 8l3-2.500v5zM15 8l-3-2.500v5z" /></>],
  ['锁定全部', <><path d="M3 7h10v7H3z" />{S('M5 7V5q0-3 3-3t3 3v2', 1.5)}</>],
];

const footIcons: [string, boolean, React.ReactNode][] = [
  ['链接图层', false, <>{S('M7 5H4.500a3 3 0 0 0 0 6H7M9 5h2.500a3 3 0 0 1 0 6H9M5 8h6', 1.5)}</>],
  ['图层样式', false, null],
  ['图层蒙版', true, <><path d="M1 3h14v11H1z" /><circle cx="8" cy="8.500" r="3" fill="#444" /></>],
  ['调整图层', true, <><circle cx="7" cy="8" r="5" fill="none" stroke="currentColor" strokeWidth="1.600" /><path d="M3.500 11.500l7-7A5 5 0 0 0 3.500 11.500zM13 13h3l-1.500 2z" /></>],
  ['新建组', true, <path d="M2 3h5l1 2h6v8H2z" />],
  ['新建图层', true, <><path d="M3 2h11v12H9V8H3z" /><path d="M3 9h5v5z" fillOpacity=".7" /></>],
  ['删除图层', false, <><path d="M2 3h4V1h4v2h4v2H2zM3 6h10l-1 9H4z" /><path d="M6 7v7M8 7v7M10 7v7" stroke="#555" strokeWidth=".8" /></>],
];

const FxText = styled.i`
  font-family: "Liberation Serif", serif;
  font-size: 15px;
  line-height: 16px;
`;

const RightDock = () => (
  <Dock>
    <IconDock>
      <PaletteHead $end><DoubleArrow left /></PaletteHead>
      <DockGroup>
        <GripRow><Grip /></GripRow>
        <IconButton $h={28} $color={c.icon} aria-label="历史记录">
          <Icon>{box(2, 1, 5, 4)}{box(2, 7, 5, 4)}{bar(2, 13, 5, 4)}{S('M12 4q5 4 1 11', 2.4)}<path d="M9 2h7l-6 6z" /></Icon>
        </IconButton>
      </DockGroup>
      <DockGroup>
        <GripRow><Grip /></GripRow>
        <IconButton $h={28} $color={c.icon} aria-label="属性">
          <Icon><path d="M6 1l5 2v6l-5 3-5-3V3z" fill="#777" stroke="currentColor" strokeWidth="1.400" />{S('M1 3l5 3 5-3M6 6v6', 1)}{bar(13, 2, 4, 4)}{bar(13, 7, 4, 5)}{bar(1, 14, 16, 4)}<path d="M11 15h4l-2 2z" fill="#333" /></Icon>
        </IconButton>
      </DockGroup>
      <DockGroup>
        <GripRow><Grip /></GripRow>
        <IconButton $h={28} $color={c.icon} aria-label="字符">
          <Icon>{S('M2 15L7 2l5 13M4 10.500h6', 1.8)}{S('M15.500 1v16', 1)}</Icon>
        </IconButton>
        <IconButton $h={30} $color={c.icon} aria-label="段落">
          <Icon><path d="M15 2H8Q4 2 4 6t4 4h1v7h1V3h2v14h1V3h2z" /></Icon>
        </IconButton>
      </DockGroup>
    </IconDock>

    <Panels>
      <PaletteHead $end><DoubleArrow /></PaletteHead>
      <Panel $h={133}>
        <PanelTabs names={['颜色', '色板']} label="颜色菜单" />
        <ColorBody>
          <ColorPair />
          <div>
            {[['R', '#f00'], ['G', '#0f0'], ['B', '#00f']].map(([n, to]) => (
              <Channel key={n}>
                {n}
                <ChannelSlider type="range" min={0} max={255} defaultValue={0} $to={to} aria-label={`${n} 滑块`} />
                <ValueInput $w={40} defaultValue="0" aria-label={n} />
              </Channel>
            ))}
          </div>
        </ColorBody>
        <Spectrum />
      </Panel>
      <Panel $h={134}>
        <PanelTabs names={['调整', '样式']} label="调整菜单" />
        <AdjustBody>
          <AdjustTitle>添加调整</AdjustTitle>
          {adjustRows.map((row, i) => (
            <Row key={i}>
              {row.map(([name, art]) => (
                <IconButton key={name} $color={c.icon} aria-label={name}><Icon>{art}</Icon></IconButton>
              ))}
            </Row>
          ))}
        </AdjustBody>
      </Panel>
      <Panel>
        <PanelTabs names={['图层', '通道', '路径']} label="图层菜单" />
        <LayerBar $h={28}>
          <Picker w={70} label="过滤类型" value="类型" dim pad={21} lead={<Icon w={20} h={11}><circle cx="13" cy="4.500" r="3.500" fill="none" stroke="currentColor" strokeWidth="1.400" />{S('M11 7l-4 4', 1.8)}</Icon>} />
          <FilterRow>
            <IconGroup icons={filterIcons} />
            <Toggle aria-label="过滤开关" />
          </FilterRow>
        </LayerBar>
        <LayerBar>
          <Picker w={110} label="混合模式" value="正常" dim />
          <PercentField label="不透明度" />
        </LayerBar>
        <LayerBar $h={31}>
          <span>锁定:</span>
          <Row style={{ marginLeft: 6 }}>
            {lockIcons.map(([name, art]) => (
              <IconButton key={name} $w={22} aria-label={name}><Icon w={14} h={14} vb="0 0 16 16">{art}</Icon></IconButton>
            ))}
          </Row>
          <PercentField label="填充" />
        </LayerBar>
        <LayerList>
          <LayerItem>
            <EyeCell $w={30} $h={40} $color="#ddd" aria-label="显示图层">
              <Icon w={13} h={9}><path d="M0 5Q6 -3 13 5 6 12 0 5z" /><circle cx="6.500" cy="4.500" r="2.800" fill="#444" /><circle cx="6" cy="4" r="1.200" /></Icon>
            </EyeCell>
            <LayerMain>
              <LayerThumb />
              <LayerName>背景</LayerName>
              <Icon w={15} h={15}><path d="M2.500 6.500h10v7h-10z" fill="none" stroke="currentColor" strokeWidth="1.300" />{S('M4.500 6V4q0-3 3-3t3 3v2', 1.4)}<path d="M6.500 8h2v4h-2z" /></Icon>
            </LayerMain>
          </LayerItem>
        </LayerList>
        <LayerFoot>
          {footIcons.map(([name, on, art]) => (
            <IconButton key={name} $w={27} $h={18} $color={on ? '#e0e0e0' : '#999'} aria-label={name}>
              {art ? <Icon w={15} h={15} vb="0 0 16 16">{art}</Icon> : <FxText>fx</FxText>}
            </IconButton>
          ))}
        </LayerFoot>
      </Panel>
    </Panels>
  </Dock>
);

/* ---------- watermark ---------- */

const Watermark = styled.div`
  position: fixed;
  right: 102px;
  bottom: 45px;
  display: flex;
  flex-direction: column;
  gap: 5px;
  color: #fff;
  opacity: .74;
  pointer-events: none;
`;

const MarkRow = styled.div`
  display: flex;
  align-items: flex-end;
  height: 108px;
`;

const Latin = styled.span`
  width: 118px;
  font: 700 76px/60px "Liberation Sans", sans-serif;
`;

const Hanzi = styled.span`
  margin-left: 3px;
  font: 900 57px/60px "Noto Sans CJK SC", sans-serif;
`;

const Url = styled.span`
  font-size: 40px;
  line-height: 46px;
`;

const BaiduMark = () => (
  <Watermark>
    <MarkRow>
      <Latin>Bai</Latin>
      <Icon w={102} h={108}>
        <ellipse cx="14" cy="41" rx="13" ry="16" />
        <ellipse cx="38" cy="17" rx="12" ry="17" />
        <ellipse cx="69" cy="19" rx="13" ry="16" transform="rotate(8 69 19)" />
        <ellipse cx="88" cy="48" rx="13" ry="16" />
        <path d="M50 44q12 0 18 10 6 9 16 16 11 8 11 20-1 17-19 18-9 0-16-3-9-2-18 0-9 3-18 2-16-2-16-20 0-10 12-18 9-6 14-15 6-10 16-10z" />
        <text x="20" y="96" fill="#3c3c3c" fontFamily="Liberation Sans, sans-serif" fontWeight="700" fontSize="48">du</text>
      </Icon>
      <Hanzi>经验</Hanzi>
    </MarkRow>
    <Url>jingyan.baidu.com</Url>
  </Watermark>
);

export default function App() {
  return (
    <Shell>
      <GlobalStyle />
      <TopMenu />
      <Options />
      <Workspace>
        <ToolPalette />
        <Center>
          <DocumentWindow />
          <Timeline />
        </Center>
        <RightDock />
      </Workspace>
      <BaiduMark />
    </Shell>
  );
}
